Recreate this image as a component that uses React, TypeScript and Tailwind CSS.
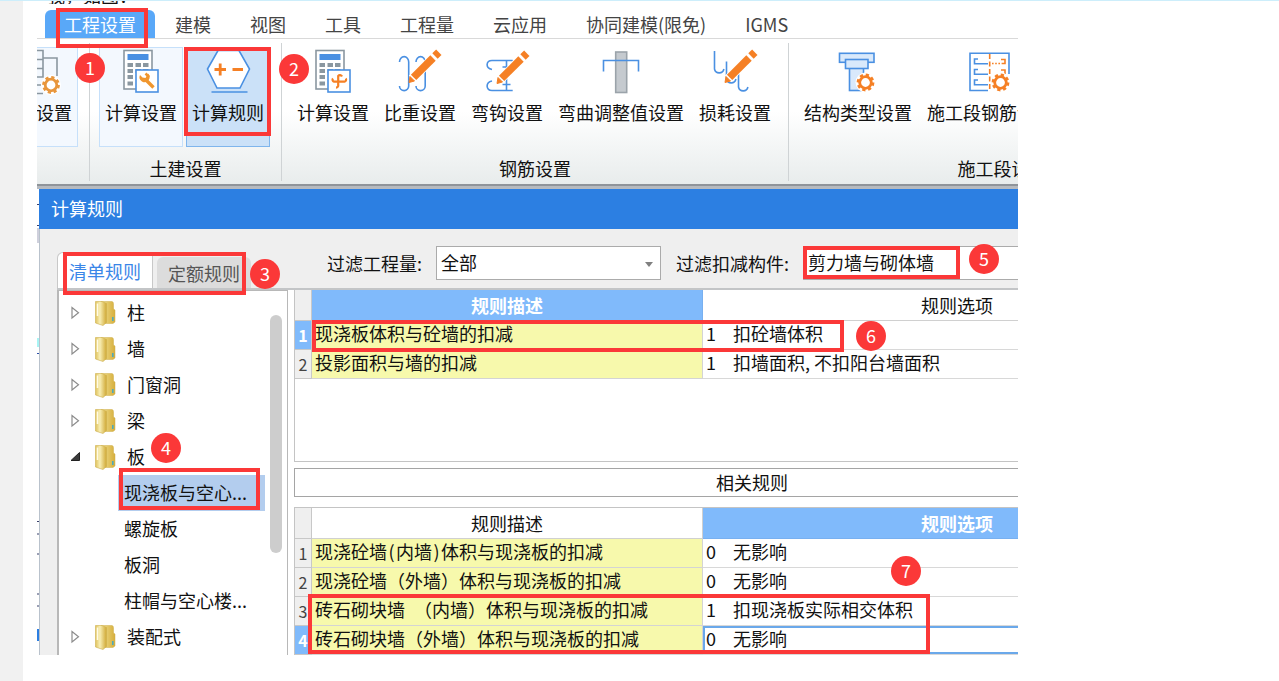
import type { ReactNode } from "react";

const BLUE = "#4a90e2";
const ORANGE = "#f58025";
const GRAY = "#8a97a0";

function Icon({ children }: { children: ReactNode }) {
  return (
    <svg viewBox="0 0 48 48" className="size-12 shrink-0" fill="none" strokeWidth="1.6" aria-hidden="true">
      {children}
    </svg>
  );
}

function Gear({ x, y, color = ORANGE }: { x: number; y: number; color?: string }) {
  return (
    <g transform={`translate(${x} ${y})`}>
      <circle r="10" fill="#fff" />
      <circle r="7.6" stroke={color} strokeWidth="2.6" strokeDasharray="3.2 2.77" />
      <circle r="5.8" stroke={color} strokeWidth="2.8" />
    </g>
  );
}

function Pencil({ x, y }: { x: number; y: number }) {
  return (
    <g transform={`translate(${x} ${y})`}>
      <path d="M3 -3 L25 -25" stroke="#fff" strokeWidth="9" />
      <path d="M0 0.5 L1 -5.5 L5.5 -1 Z" fill={ORANGE} stroke={ORANGE} strokeWidth="1" />
      <path d="M4.6 -4.6 L24 -24" stroke={ORANGE} strokeWidth="7.6" />
      <path d="M26 -26 L29.8 -29.8" stroke={ORANGE} strokeWidth="7.6" />
    </g>
  );
}

function Calculator() {
  return (
    <>
      <rect x="7" y="2.5" width="28" height="38.5" fill="#fff" stroke={GRAY} />
      <rect x="10.5" y="6" width="21" height="6" fill={BLUE} />
      <path
        d="M10.5 17H16M18.5 17H24M26 17H31.5M10.5 23H16M18.5 23H24M26 23H31.5M10.5 29H16M10.5 35.5H16"
        stroke={GRAY}
        strokeWidth="4"
      />
      <rect x="19" y="22" width="22" height="22" fill="#fff" stroke={BLUE} />
    </>
  );
}

const icons = {
  wrench: (
    <Icon>
      <Calculator />
      <path d="M29 32 L36.5 39.5" stroke="#f0962e" strokeWidth="3.4" />
      <path d="M23 27 a5 5 0 1 0 8 -1.5 L28.5 30 L25.5 29.5 Z" fill="#f0962e" />
      <path d="M28.5 25.5 L32 29" stroke="#f0962e" strokeWidth="2.5" />
    </Icon>
  ),
  hexagon: (
    <Icon>
      <path d="M3.5 21 L14 2.5 H35 L45.5 21 L36 40 H13 Z" fill="#fff" stroke={BLUE} />
      <path d="M7.5 44 H43.5" stroke={BLUE} />
      <path d="M10.5 21.5 H22 M16.2 15.5 V27.5 M28.5 21.5 H39" stroke={ORANGE} strokeWidth="2.8" />
    </Icon>
  ),
  cross: (
    <Icon>
      <Calculator />
      <path
        d="M33 28.5 a2.2 2.2 0 0 0 -3.8 -0.5 V38 a2.2 2.2 0 0 1 -2.2 1.6 M24 30.5 a2 2 0 0 0 1 3.2 H35.5 a2 2 0 0 0 1.2 -3.2"
        stroke={ORANGE}
        strokeWidth="2.2"
      />
    </Icon>
  ),
  hooks: (
    <Icon>
      <path
        d="M3.5 14 a4.6 5.4 0 0 1 9.2 0 V38 a4.6 4.6 0 0 1 -9.2 0 M20 14 a4.6 5.4 0 0 1 9.2 0 V38 a4.6 4.6 0 0 1 -9.2 0"
        stroke={BLUE}
      />
      <Pencil x={13} y={34} />
    </Icon>
  ),
  bend: (
    <Icon>
      <path
        d="M9 21.5 C2 20 3 12.5 9 12.5 H29.7 M9 33 C2 34.5 3 42.5 9 42.5 H29.7 M23.5 12.5 V42.5 M19.5 19 H27.5 M19.5 36.5 H27.5"
        stroke={BLUE}
      />
      <Pencil x={14} y={35} />
    </Icon>
  ),
  adjust: (
    <Icon>
      <rect x="18.7" y="4" width="11" height="40.5" fill="#c5cacf" stroke="#9ba3aa" />
      <path d="M6.5 23.5 V12.5 H41.5 V23.5" stroke={BLUE} />
    </Icon>
  ),
  loss: (
    <Icon>
      <path
        d="M3.5 3 V21 a4.8 4.8 0 0 0 9.4 0 M15.5 13.5 V31 a4.8 4.8 0 0 0 9.4 0 M27.5 25 V39 a4.8 4.8 0 0 0 9.4 0"
        stroke={BLUE}
      />
      <Pencil x={14} y={34} />
    </Icon>
  ),
  structure: (
    <Icon>
      <rect x="15.5" y="20" width="14" height="22.5" fill="#d9e9fb" stroke={BLUE} />
      <rect x="5.5" y="5.3" width="34.5" height="9" fill="#d9e9fb" stroke={BLUE} />
      <rect x="11.5" y="11.5" width="22.5" height="9" fill="#d9e9fb" stroke={BLUE} />
      <Gear x={31.5} y={34.5} />
    </Icon>
  ),
  section: (
    <Icon>
      <path d="M22 42.5 H4 V5.3 H43 V26" fill="#fff" stroke={BLUE} />
      <path d="M12 11 H8.5 V15.7 H22 M12 21.5 H8.5 V26.2 H22 M12 32 H8.5 V36.7 H22" stroke={BLUE} />
      <path d="M23.7 6 V43" stroke={ORANGE} strokeDasharray="5 2.5" />
      <path d="M26 15.5 H36" stroke={ORANGE} strokeDasharray="1.6 1.6" />
      <path d="M35 11.5 H39 V15.5 H36 M35 22 H39 V26" stroke={ORANGE} />
      <Gear x={34.5} y={34.5} />
    </Icon>
  ),
};

type Tool = { label: string; icon: keyof typeof icons; state?: "framed" | "active" };

function ToolButton({ label, icon, state }: Tool) {
  const tone =
    state === "active"
      ? "border-[#7fb5ec] bg-[#cbe1f8]"
      : state === "framed"
        ? "border-[#c6e0fa] bg-[#f3f8fe]"
        : "border-transparent";
  return (
    <button
      type="button"
      className={`flex h-[100px] shrink-0 flex-col items-center border px-[5px] whitespace-nowrap ${tone}`}
    >
      {icons[icon]}
      <span className="mt-0.5 leading-7">{label}</span>
    </button>
  );
}

function ToolGroup({ label, tools, wide }: { label: string; tools: Tool[]; wide?: boolean }) {
  return (
    <section
      className={`flex shrink-0 flex-col justify-between border-r border-[#cfd3d5] ${wide ? "w-[428px]" : ""}`}
    >
      <div className="flex gap-[3px] pt-1 pr-[11px] pl-[9px]">
        {tools.map((t, i) => (
          <ToolButton key={i} {...t} />
        ))}
      </div>
      <h2 className="pb-px text-center leading-6">{label}</h2>
    </section>
  );
}

function Folder() {
  return (
    <svg viewBox="0 0 22 26" className="h-[26px] w-[22px] shrink-0" aria-hidden="true">
      <defs>
        <linearGradient id="folderBack" x1="0" x2="1">
          <stop offset="0" stopColor="#f0e090" />
          <stop offset="1" stopColor="#d6ae3c" />
        </linearGradient>
        <linearGradient id="folderFront" x1="0" x2="1">
          <stop offset="0" stopColor="#dfc25c" />
          <stop offset=".4" stopColor="#f8eeb4" />
          <stop offset="1" stopColor="#d0a935" />
        </linearGradient>
      </defs>
      <path d="M7 1.5 H18 Q19.5 1.5 19.5 4 V9 L21 10 V22 L19 23.5 H9 Z" fill="url(#folderBack)" stroke="#cfae4a" strokeWidth=".5" />
      <path d="M1.5 1.5 H8 L12.5 3.5 V22.5 L9 25.5 L1.5 23 Z" fill="url(#folderFront)" stroke="#cfb04e" strokeWidth=".6" />
      <path d="M3.5 3.5 V16" stroke="#fffbe6" strokeWidth="1.6" />
      <rect x="18" y="17" width="1.6" height="4" fill="#4fa9b8" />
    </svg>
  );
}

function Branch({ label, open }: { label: string; open?: boolean }) {
  return (
    <button type="button" aria-expanded={!!open} className="flex h-9 w-full items-center pl-2.5 text-left">
      <svg viewBox="0 0 12 14" className="mr-[13px] h-3.5 w-3" aria-hidden="true">
        {open ? (
          <path d="M10.5 2.5 V10.5 H2 Z" fill="#3a3a3a" stroke="#222" />
        ) : (
          <path d="M3 1.5 V12 L9.5 6.8 Z" fill="#fff" stroke="#8c8c8c" strokeWidth="1.2" />
        )}
      </svg>
      <Folder />
      <span className="ml-[11px] pb-0.5">{label}</span>
    </button>
  );
}

function Leaf({ label, selected }: { label: string; selected?: boolean }) {
  return (
    <button type="button" className="flex h-9 w-full pr-[22px] pl-[59px] text-left">
      <span
        className={`flex h-full grow items-center pb-0.5 pl-[6px] whitespace-nowrap ${selected ? "bg-[#b3cdee]" : ""}`}
      >
        {label}
      </span>
    </button>
  );
}

type Rule = { text: ReactNode; code: string; option: string; current?: boolean; focus?: boolean };

function RuleTable({ rules, highlight }: { rules: Rule[]; highlight: "text" | "option" }) {
  const on = "bg-[#80bafb] font-bold text-white border-[#78b0f0]";
  const off = "bg-white font-normal border-[#d0d0d0]";
  return (
    <table className="w-[916px] table-fixed border-separate border-spacing-0">
      <colgroup>
        <col className="w-[17px]" />
        <col className="w-[391px]" />
        <col />
      </colgroup>
      <thead>
        <tr className="h-[31px]">
          <th className="border-r border-b border-[#c8c8c8] bg-[#efefef] p-0" aria-label="序号" />
          <th className={`border-r border-b p-0 ${highlight === "text" ? on : off}`}>规则描述</th>
          <th className={`border-b p-0 ${highlight === "option" ? on : off}`}>规则选项</th>
        </tr>
      </thead>
      <tbody className="leading-6">
        {rules.map((r, i) => (
          <tr key={i} className="h-[29px]">
            <th
              scope="row"
              className={`border-r border-b border-[#c8c8c8] p-0 text-center text-base ${
                r.current ? "bg-[#80bafb] font-bold text-white" : "bg-[#efefef] font-normal text-[#444]"
              }`}
            >
              {i + 1}
            </th>
            <td className="border-r border-b border-[#d4d4d4] bg-[#f7f9ac] p-0 pl-[3px] align-top whitespace-nowrap">
              {r.text}
            </td>
            <td
              className={`border-b border-[#d8d8d8] p-0 pl-[3px] align-top whitespace-nowrap ${
                r.focus ? "ring-2 ring-[#6aa8ea] ring-inset" : ""
              }`}
            >
              <span className="inline-block w-[27px]">{r.code}</span>
              {r.option}
            </td>
          </tr>
        ))}
      </tbody>
    </table>
  );
}

function Half({ children }: { children: string }) {
  return <span className="inline-block w-[9px] text-center">{children}</span>;
}

const topRules: Rule[] = [
  { text: "现浇板体积与砼墙的扣减", code: "1", option: "扣砼墙体积", current: true },
  { text: "投影面积与墙的扣减", code: "1", option: "扣墙面积, 不扣阳台墙面积" },
];

const relatedRules: Rule[] = [
  {
    text: (
      <>
        现浇砼墙<Half>(</Half>内墙<Half>)</Half>体积与现浇板的扣减
      </>
    ),
    code: "0",
    option: "无影响",
  },
  { text: "现浇砼墙（外墙）体积与现浇板的扣减", code: "0", option: "无影响" },
  { text: "砖石砌块墙\u2002（内墙）体积与现浇板的扣减", code: "1", option: "扣现浇板实际相交体积" },
  { text: "砖石砌块墙（外墙）体积与现浇板的扣减", code: "0", option: "无影响", current: true, focus: true },
];

const menu = ["工程设置", "建模", "视图", "工具", "工程量", "云应用", "协同建模(限免)", "IGMS"];

const frames = [
  "left-[56px] top-[8px] w-[92px] h-[40px]",
  "left-[184px] top-[47px] w-[87px] h-[89px]",
  "left-[63px] top-[252px] w-[183px] h-[43px]",
  "left-[119px] top-[468px] w-[141px] h-[42px]",
  "left-[803px] top-[246px] w-[157px] h-[33px]",
  "left-[312px] top-[320px] w-[532px] h-[32px]",
  "left-[308px] top-[594px] w-[622px] h-[60px]",
];

const badges = [
  "left-[75px] top-[53px]",
  "left-[279px] top-[54px]",
  "left-[250px] top-[259px]",
  "left-[151px] top-[433px]",
  "left-[969px] top-[244px]",
  "left-[856px] top-[321px]",
  "left-[891px] top-[556px]",
];

function Ribbon() {
  return (
    <>
      <nav className="flex h-7 gap-px pl-2">
        {menu.map((m, i) => (
          <button
            key={m}
            type="button"
            className={`shrink-0 px-[19px] whitespace-nowrap ${
              i === 0 ? "rounded-t-md bg-[#59a8f8] text-white" : "text-[#444]"
            }`}
          >
            {m}
          </button>
        ))}
      </nav>
      <div className="border-t border-[#d9d9d9] bg-linear-to-b from-white from-50% to-[#e8ecec]">
        <div className="flex h-[145px] overflow-hidden pt-1 pb-[3px]">
          <section className="w-[53px] shrink-0 border-r border-[#cfd3d5] pt-1">
            <button
              type="button"
              className="flex h-[100px] w-[41px] flex-col items-end overflow-hidden border-y border-r border-[#c6e0fa] bg-[#f3f8fe] pr-[5px] whitespace-nowrap"
            >
              <svg viewBox="0 0 35 48" className="h-12 w-[35px]" fill="none" strokeWidth="1.6" aria-hidden="true">
                <path d="M0 2.5 H6 V29 H0 M0 11.5 H6 M0 20.5 H6 M6 10 H20 V28 M0 37 H4 M0 45.5 H6" stroke={GRAY} />
                <Gear x={14} y={37} color="#e8963c" />
              </svg>
              <span className="mt-0.5 leading-7">设置</span>
            </button>
          </section>
          <ToolGroup
            label="土建设置"
            tools={[
              { label: "计算设置", icon: "wrench", state: "framed" },
              { label: "计算规则", icon: "hexagon", state: "active" },
            ]}
          />
          <ToolGroup
            label="钢筋设置"
            tools={[
              { label: "计算设置", icon: "cross" },
              { label: "比重设置", icon: "hooks" },
              { label: "弯钩设置", icon: "bend" },
              { label: "弯曲调整值设置", icon: "adjust" },
              { label: "损耗设置", icon: "loss" },
            ]}
          />
          <ToolGroup
            wide
            label="施工段设置"
            tools={[
              { label: "结构类型设置", icon: "structure" },
              { label: "施工段钢筋设置", icon: "section" },
            ]}
          />
        </div>
      </div>
      <div className="h-[5px] border-t-2 border-[#8f949a] bg-[#b6babf]" />
    </>
  );
}

function Dialog() {
  return (
    <section className="min-w-0 grow">
      <h1 className="flex h-10 items-center bg-[#2c7fe2] pb-0.5 pl-3 text-white">计算规则</h1>
      <div className="border-l border-[#b9c2cc] bg-[#efefef] pl-[17px]">
        <div className="flex h-[61px] border-b-2 border-[#c3c5c7]">
          <div className="flex w-[259px] shrink-0 items-end gap-1">
            <button
              type="button"
              className="h-9 w-[96px] rounded-tl-md border-t border-r border-l border-[#c8c8c8] bg-white pt-0.5 text-[#3a86e8]"
            >
              清单规则
            </button>
            <button type="button" className="h-[31px] w-[94px] rounded-t-md bg-[#dcdcdc] pt-0.5 text-[#555]">
              定额规则
            </button>
          </div>
          <div className="flex grow items-start overflow-hidden pt-[17px] pl-[11px]">
            <label htmlFor="quantity" className="w-[109px] shrink-0 leading-[34px] whitespace-nowrap">
              过滤工程量:
            </label>
            <div className="relative h-[34px] w-[225px] shrink-0">
              <select
                id="quantity"
                defaultValue="全部"
                className="size-full appearance-none border border-[#ababab] bg-white pb-0.5 pl-1 leading-6"
              >
                <option>全部</option>
              </select>
              <svg viewBox="0 0 8 5" className="pointer-events-none absolute top-4 right-2 h-[5px] w-2" aria-hidden="true">
                <path d="M0 0 H8 L4 5 Z" fill="#808080" />
              </svg>
            </div>
            <label htmlFor="component" className="ml-[15px] w-[127px] shrink-0 leading-[34px] whitespace-nowrap">
              过滤扣减构件:
            </label>
            <select
              id="component"
              defaultValue="剪力墙与砌体墙"
              className="h-[34px] w-[225px] shrink-0 appearance-none border border-[#ababab] bg-white pb-0.5 pl-1"
            >
              <option>剪力墙与砌体墙</option>
            </select>
          </div>
        </div>
        <div className="flex bg-white">
          <div className="flex w-[231px] shrink-0 border-t border-r border-l-2 border-[#b8b8b8]">
            <div className="min-w-0 grow pt-1">
              <Branch label="柱" />
              <Branch label="墙" />
              <Branch label="门窗洞" />
              <Branch label="梁" />
              <Branch label="板" open />
              <Leaf label="现浇板与空心..." selected />
              <Leaf label="螺旋板" />
              <Leaf label="板洞" />
              <Leaf label="柱帽与空心楼..." />
              <Branch label="装配式" />
            </div>
            <div className="-ml-[17px] w-[17px] shrink-0 pt-6">
              <div className="h-[238px] w-3 rounded-full bg-[#cdcdcd]" />
            </div>
          </div>
          <div className="ml-1.5 min-w-0 grow overflow-hidden">
            <div className="h-[172px] overflow-hidden border-b border-l border-[#c4c4c4]">
              <RuleTable rules={topRules} highlight="text" />
            </div>
            <div className="mt-1.5 flex h-[29px] w-[916px] items-center justify-center border border-[#a5a5a5]">
              相关规则
            </div>
            <div className="mt-2.5 h-[148px] overflow-hidden border-t border-l border-[#c4c4c4]">
              <RuleTable rules={relatedRules} highlight="option" />
            </div>
          </div>
        </div>
      </div>
    </section>
  );
}

export default function App() {
  return (
    <div className="relative flex min-h-screen overflow-hidden border-t border-[#cdeefb] bg-white font-['Noto_Sans_CJK_SC',sans-serif] text-[18px] text-[#111]">
      <aside className="w-[23px] shrink-0 bg-[#f1f1f1]" />
      <main className="mr-[261px] ml-[14px] min-w-0 grow overflow-hidden">
        <div className="h-[9px] pl-2.5">
          <p className="flex h-[3px] items-end overflow-hidden leading-[18px]">我，如图：</p>
        </div>
        <Ribbon />
        <div className="flex">
          <svg viewBox="0 0 2 466" className="h-[466px] w-0.5 shrink-0" aria-hidden="true">
            <path d="M0 15.5H2M0 36.5H2M0 332.5H2M0 345H2M0 365H2M0 405H2M0 417H2" stroke="#39406b" />
            <path d="M1 39V54" stroke="#cfd0dc" strokeWidth="2" />
            <path d="M1 149V158" stroke="#a8f4f4" strokeWidth="2" />
            <path d="M0 164.5H2" stroke="#2b4fa8" />
            <path d="M1 440V452" stroke="#2c7fe2" strokeWidth="2" />
          </svg>
          <Dialog />
        </div>
      </main>
      <div className="pointer-events-none absolute -top-px left-0">
        {frames.map((f) => (
          <div key={f} className={`absolute border-4 border-[#fb3838] ${f}`} />
        ))}
        {badges.map((b, i) => (
          <span
            key={b}
            className={`absolute flex size-[30px] items-center justify-center rounded-full bg-[#fb3838] pb-0.5 text-white ${b}`}
          >
            {i + 1}
          </span>
        ))}
      </div>
    </div>
  );
}
